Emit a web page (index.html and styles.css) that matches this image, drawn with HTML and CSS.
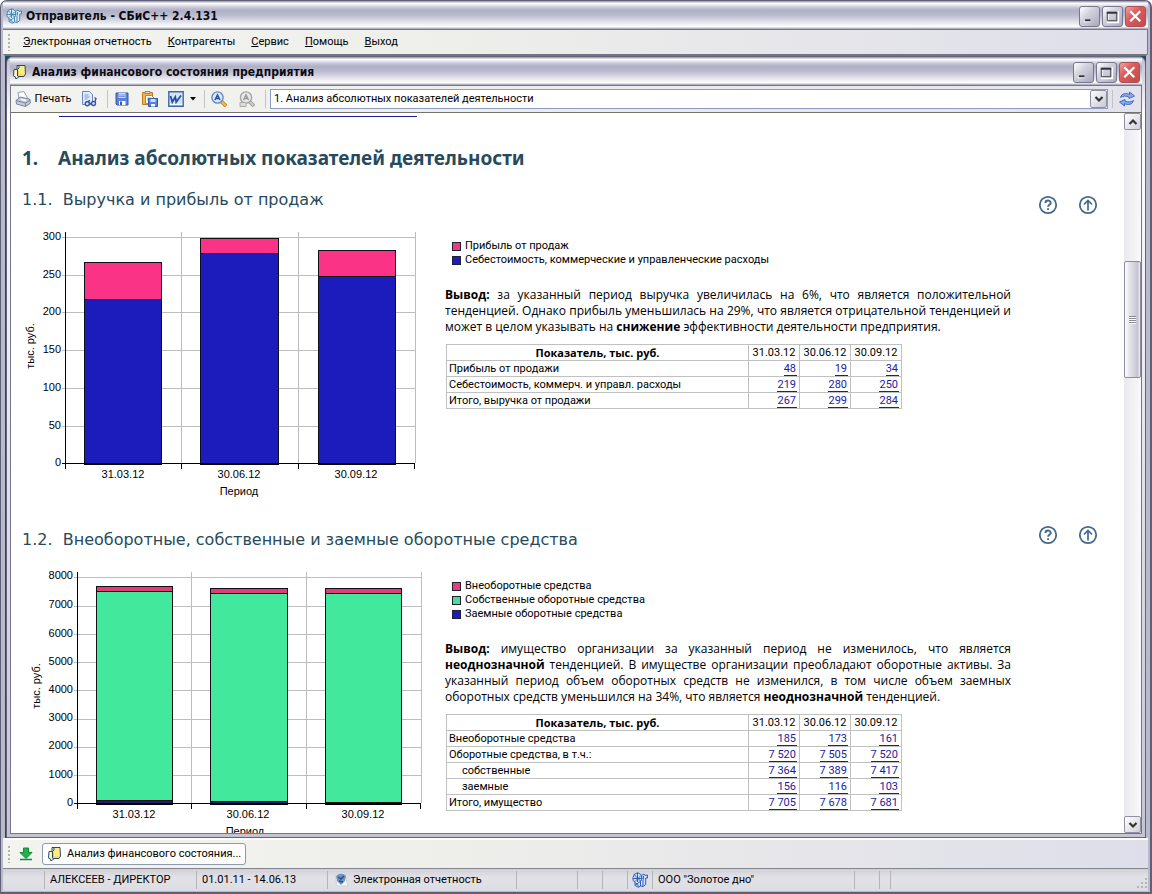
FILE: index.html
```html
<!DOCTYPE html>
<html lang="ru">
<head>
<meta charset="utf-8">
<title>Отправитель - СБиС++ 2.4.131</title>
<link rel="stylesheet" href="styles.css">
</head>
<body>
<svg class="defs" aria-hidden="true">
  <symbol id="i-logo" viewBox="0 0 16 16"><path d="M1 5.500 2.500 2 6 .800 9.500 3 10 7 8.500 9.500V14l-2 1.300L3 13.500V10L1 8.500Z" fill="var(--fill)" stroke="currentColor"/><path d="m2.500 3 6 6M9 3.500 3 9.500M5.500 1v9M1 6.500h9M3 13.500l5-4M3.500 10.500 7.500 15" fill="none" stroke="currentColor"/><path d="M9.500 3.500 12 2l1 1.500L15.500 3v3h-1.800v6.500L11 14.500 8.500 14V9.500L10 7Z" fill="var(--fill)" stroke="currentColor"/><path d="M11.500 4v3.500M11 8v6" stroke="currentColor"/></symbol>
  <symbol id="i-doc" viewBox="0 0 16 16"><path d="M5 1.500h8l.5 8.500-1.500 2.500H7L5 14Z" fill="#fbec86" stroke="#2c4a6c"/><path d="M7 1.500V4L5 6" fill="none" stroke="#2c4a6c"/><path d="M2 5.500h3.500V12L7 12.500l-2 2H3.500V13L1.500 12Z" fill="#fdf6b8" stroke="#2c4a6c"/><path d="M6.500 6.500V11h5" fill="none" stroke="#f0cc50"/></symbol>
  <symbol id="i-min" viewBox="0 0 20 20"><path d="M4 13h7v3H4Z" fill="#fff"/><path d="M5 13h6v2H5Z" fill="#333344"/></symbol>
  <symbol id="i-max" viewBox="0 0 20 20"><path d="M5 5.500h11V16H5Z" fill="none" stroke="#fff" stroke-width="2"/><path d="M4.500 5.500h10v9h-10Z" fill="none" stroke="#33333f"/><path d="M4 5h11v2H4Z" fill="#33333f"/></symbol>
  <symbol id="i-close" viewBox="0 0 20 20"><path d="m4.500 4.500 10.500 10.500M15 4.500 4.500 15" stroke="#fff" stroke-width="2.400"/></symbol>
  <symbol id="i-down" viewBox="0 0 10 10"><path d="m1.500 3 3.500 3.500L8.500 3" fill="none" stroke="#333" stroke-width="2.200"/></symbol>
  <symbol id="i-up" viewBox="0 0 10 10"><path d="M1.500 7 5 3.500 8.500 7" fill="none" stroke="#333" stroke-width="2.200"/></symbol>
  <symbol id="i-help" viewBox="0 0 20 20"><circle cx="10" cy="10" r="8.200" fill="#fff" stroke="#43698b" stroke-width="1.800"/><path d="M7.400 8C7.400 4.700 12.700 4.800 12.700 7.900 12.700 9.900 10.100 9.700 10.100 11.800M10.100 13.200v1.800" fill="none" stroke="#43698b" stroke-width="1.900"/></symbol>
  <symbol id="i-top" viewBox="0 0 20 20"><circle cx="10" cy="10" r="8.200" fill="#fff" stroke="#43698b" stroke-width="1.800"/><path d="M10 15.500V6M6 9.500l4-4 4 4" fill="none" stroke="#43698b" stroke-width="1.700"/></symbol>
</svg>

<div class="app">
  <header class="titlebar">
    <svg class="ico logo-light"><use href="#i-logo"/></svg>
    <h1 class="caption">Отправитель - СБиС++ 2.4.131</h1>
    <button class="winbtn" aria-label="Свернуть"><svg><use href="#i-min"/></svg></button>
    <button class="winbtn" aria-label="Развернуть"><svg><use href="#i-max"/></svg></button>
    <button class="winbtn close" aria-label="Закрыть"><svg><use href="#i-close"/></svg></button>
  </header>
  <nav class="menu">
    <span class="grip"></span>
    <button><u>Э</u>лектронная отчетность</button>
    <button><u>К</u>онтрагенты</button>
    <button><u>С</u>ервис</button>
    <button><u>П</u>омощь</button>
    <button><u>В</u>ыход</button>
  </nav>

  <div class="mdi">
    <div class="child">
      <header class="titlebar inner">
        <svg class="ico"><use href="#i-doc"/></svg>
        <h2 class="caption">Анализ финансового состояния предприятия</h2>
        <button class="winbtn" aria-label="Свернуть"><svg><use href="#i-min"/></svg></button>
        <button class="winbtn" aria-label="Развернуть"><svg><use href="#i-max"/></svg></button>
        <button class="winbtn close" aria-label="Закрыть"><svg><use href="#i-close"/></svg></button>
      </header>

      <div class="toolbar">
        <button class="tool print"><svg class="ico" viewBox="0 0 16 16"><path d="M4 8 3 1.500 9 .500l3.500 6.500" fill="#fff" stroke="#8ca0c4"/><path d="M1 9.500 5 6l9.500 2 1 4-5 3.500L1.500 13Z" fill="#c5cbdc" stroke="#7a84a0"/><path d="m1 9.500 9.500 2.500 5-3M10.500 12v3.500" fill="none" stroke="#7a84a0"/><path d="m6 8.500 5 1" stroke="#fff" stroke-width="1.500"/></svg>Печать</button>
        <button class="tool" aria-label="Просмотр"><svg class="ico" viewBox="0 0 16 16"><path d="M1.500.500h7l3 3v10h-10Z" fill="#e3ecfc" stroke="#6b85c0"/><path d="M3.500 4h4m-4 2h5m-5 2h3" stroke="#7f97cc"/><path d="m4 12 5-2.500M13.500 12l1.500-4.500-1.500-1" fill="none" stroke="#3c5998" stroke-width="1.400"/><path d="M8 12.500h3" stroke="#3c5998" stroke-width="1.400"/><circle cx="6.300" cy="12.800" r="2" fill="#dce8ff" stroke="#3c5998" stroke-width="1.400"/><circle cx="12.500" cy="12.500" r="2" fill="#dce8ff" stroke="#3c5998" stroke-width="1.400"/></svg></button>
        <span class="sep"></span>
        <button class="tool" aria-label="Сохранить"><svg class="ico" viewBox="0 0 16 16"><path d="M2 2h12v12H3l-1-1Z" fill="#5b80da" stroke="#3557ae"/><path d="M4.500 2h7v5h-7Z" fill="#c9d9fa"/><path d="M5 4h6M5 5.500h6" stroke="#7d96da"/><path d="M5 10h6.500v4H5Z" fill="#fff"/><path d="M6 10.500h2V14H6Z" fill="#3557ae"/></svg></button>
        <button class="tool" aria-label="Сохранить как"><svg class="ico" viewBox="0 0 16 16"><path d="M.500 1.500h10v12H.500Z" fill="#f3b44a" stroke="#c27a20"/><path d="M3 .500h5v2H3Z" fill="#d9dce8" stroke="#888"/><path d="M3.500 4.500h6l3 3v5h-9Z" fill="#fff" stroke="#b5883c"/><path d="M5 7h4m-4 2h2" stroke="#e0a030"/><path d="M6.500 7.500h9v8h-9Z" fill="#5b80da" stroke="#3557ae"/><path d="M8.500 8h5v3h-5Z" fill="#d5e1fb"/><path d="M9 13h4v2.500H9Z" fill="#fff"/></svg></button>
        <button class="tool word" aria-label="Экспорт в Word"><svg class="ico" viewBox="0 0 16 16"><path d="M.800.800h14.400v14.400H.800Z" fill="#d4e4fa" stroke="#3c68b0" stroke-width="1.400"/><path d="m2.500 5 1.800 6 3-5 .9 5L13 4.500" fill="none" stroke="#2450a0" stroke-width="1.800"/><path d="M2 13.500h12" stroke="#fff"/></svg><svg class="drop" viewBox="0 0 6 4"><path d="M0 0h6L3 3.500Z"/></svg></button>
        <span class="sep"></span>
        <button class="tool" aria-label="Увеличить шрифт"><svg class="ico" viewBox="0 0 16 16"><path d="m10 10 5 5" stroke="#b87820" stroke-width="3.600"/><path d="m10 10 4.500 4.500" stroke="#f6be4c" stroke-width="2"/><circle cx="6.500" cy="6.500" r="5.600" fill="#d8e8fd" stroke="#6a87ba" stroke-width="1.400"/><path d="m4 9 2.500-5L9 9M5 7.500h3" fill="none" stroke="#2350a4" stroke-width="1.500"/></svg></button>
        <button class="tool" aria-label="Уменьшить шрифт" disabled><svg class="ico" viewBox="0 0 16 16"><path d="m10 10 5 5" stroke="#999" stroke-width="3.600"/><path d="m10 10 4.500 4.500" stroke="#ccc" stroke-width="2"/><circle cx="7" cy="6.500" r="5.600" fill="#e8e8e8" stroke="#a5a5a5" stroke-width="1.400"/><path d="m4.500 9 2.500-5 2.500 5M5.500 7.500h3" fill="none" stroke="#999" stroke-width="1.500"/><path d="M1 11.500h6v4H1Z" fill="#ddd" stroke="#aaa"/></svg></button>
        <span class="sep"></span>
        <div class="combo">
          <select aria-label="Раздел отчета"><option>1. Анализ абсолютных показателей деятельности</option></select>
          <span class="arrow"><svg><use href="#i-down"/></svg></span>
        </div>
        <span class="sep"></span>
        <button class="tool" aria-label="Обновить"><svg class="ico" viewBox="0 0 16 16"><path d="M1.500 6.500C2.500 2.500 7 1.500 10.500 3.500V1l5 4-5.500 2.500V6C7 4.500 4 5 1.500 6.500Z" fill="#86acf0" stroke="#4468bc"/><path d="M14.500 9.500C13.500 13.500 9 14.500 5.500 12.500V15l-5-4L6 8.500V10c3 1.500 6 1 8.500-.5Z" fill="#86acf0" stroke="#4468bc"/></svg></button>
      </div>

      <div class="view">
        <main class="report">
          <div class="prev"></div>
          <h2 class="h-main"><span>1.</span>Анализ абсолютных показателей деятельности</h2>

          <section class="block">
            <div class="head">
              <h3>1.1.&nbsp; Выручка и прибыль от продаж</h3>
              <button class="round" aria-label="Справка"><svg><use href="#i-help"/></svg></button>
              <button class="round" aria-label="К началу"><svg><use href="#i-top"/></svg></button>
            </div>
            <div class="cols">
              <svg class="chart" viewBox="22 228 400 282">
                <path class="grid" d="M62 237.500h354M62 275.500h354M62 312.500h354M62 350.500h354M62 388.500h354M62 426.500h354M181.500 232v231M298.500 232v231M415.500 232v231"/>
                <g class="bar">
                  <path class="pink" d="M84.500 262.500h77v37h-77ZM200.500 238.500h78v15h-78ZM318.500 250.500h77v26h-77Z"/>
                  <path class="blue" d="M84.500 299.500h77v164h-77ZM200.500 253.500h78v210h-78ZM318.500 276.500h77v187h-77Z"/>
                </g>
                <path class="axis" d="M65.500 232v237M62 463.500h353M181.500 463v6M298.500 463v6M414.500 463v6M84 464.500h78M200 464.500h79M318 464.500h78"/>
                <g class="ylab"><text x="61" y="240">300</text><text x="61" y="278">250</text><text x="61" y="315">200</text><text x="61" y="353">150</text><text x="61" y="391">100</text><text x="61" y="429">50</text><text x="61" y="466">0</text></g>
                <g class="xlab"><text x="123" y="478">31.03.12</text><text x="239" y="478">30.06.12</text><text x="356" y="478">30.09.12</text><text x="239" y="495">Период</text><text transform="translate(34 346) rotate(-90)">тыс. руб.</text></g>
              </svg>
              <div class="info">
                <ul class="legend"><li><i class="pink"></i>Прибыль от продаж</li><li><i class="blue"></i>Себестоимость, коммерческие и управленческие расходы</li></ul>
                <p><b>Вывод:</b> за указанный период выручка увеличилась на 6%, что является положительной тенденцией. Однако прибыль уменьшилась на 29%, что является отрицательной тенденцией и может в целом указывать на <b>снижение</b> эффективности деятельности предприятия.</p>
                <table>
                  <thead><tr><th>Показатель, тыс. руб.</th><td>31.03.12</td><td>30.06.12</td><td>30.09.12</td></tr></thead>
                  <tbody>
                    <tr><td>Прибыль от продажи</td><td><a href="#">48</a></td><td><a href="#">19</a></td><td><a href="#">34</a></td></tr>
                    <tr><td>Себестоимость, коммерч. и управл. расходы</td><td><a href="#">219</a></td><td><a href="#">280</a></td><td><a href="#">250</a></td></tr>
                    <tr><td>Итого, выручка от продажи</td><td><a href="#">267</a></td><td><a href="#">299</a></td><td><a href="#">284</a></td></tr>
                  </tbody>
                </table>
              </div>
            </div>
          </section>

          <section class="block">
            <div class="head raised">
              <h3>1.2.&nbsp; Внеоборотные, собственные и заемные оборотные средства</h3>
              <button class="round" aria-label="Справка"><svg><use href="#i-help"/></svg></button>
              <button class="round" aria-label="К началу"><svg><use href="#i-top"/></svg></button>
            </div>
            <div class="cols">
              <svg class="chart" viewBox="22 568 400 282">
                <path class="grid" d="M74 577.500h348M74 606.500h348M74 634.500h348M74 662.500h348M74 690.500h348M74 719.500h348M74 747.500h348M74 775.500h348M191.500 572v231M306.500 572v231M421.500 572v231"/>
                <g class="bar">
                  <path class="rose" d="M96.500 586.500h76v5h-76ZM210.500 588.500h77v5h-77ZM325.500 588.500h76v5h-76Z"/>
                  <path class="green" d="M96.500 591.500h76v209h-76ZM210.500 593.500h77v208h-77ZM325.500 593.500h76v209h-76Z"/>
                  <path class="navy" d="M96.500 800.500h76v3h-76ZM210.500 801.500h77v2h-77ZM325.500 802.500h76v1h-76Z"/>
                </g>
                <path class="axis" d="M77.500 572v237M74 803.500h347M191.500 803v6M306.500 803v6M420.500 803v6M96 804.500h77M210 804.500h78M325 804.500h77"/>
                <g class="ylab"><text x="73" y="579">8000</text><text x="73" y="608">7000</text><text x="73" y="637">6000</text><text x="73" y="665">5000</text><text x="73" y="693">4000</text><text x="73" y="721">3000</text><text x="73" y="749">2000</text><text x="73" y="778">1000</text><text x="73" y="806">0</text></g>
                <g class="xlab"><text x="134" y="818">31.03.12</text><text x="248" y="818">30.06.12</text><text x="363" y="818">30.09.12</text><text x="245" y="835">Период</text><text transform="translate(40 686) rotate(-90)">тыс. руб.</text></g>
              </svg>
              <div class="info">
                <ul class="legend"><li><i class="rose"></i>Внеоборотные средства</li><li><i class="green"></i>Собственные оборотные средства</li><li><i class="blue"></i>Заемные оборотные средства</li></ul>
                <p><b>Вывод:</b> имущество организации за указанный период не изменилось, что является <b>неоднозначной</b> тенденцией. В имуществе организации преобладают оборотные активы. За указанный период объем оборотных средств не изменился, в том числе объем заемных оборотных средств уменьшился на 34%, что является <b>неоднозначной</b> тенденцией.</p>
                <table>
                  <thead><tr><th>Показатель, тыс. руб.</th><td>31.03.12</td><td>30.06.12</td><td>30.09.12</td></tr></thead>
                  <tbody>
                    <tr><td>Внеоборотные средства</td><td><a href="#">185</a></td><td><a href="#">173</a></td><td><a href="#">161</a></td></tr>
                    <tr><td>Оборотные средства, в т.ч.:</td><td><a href="#">7 520</a></td><td><a href="#">7 505</a></td><td><a href="#">7 520</a></td></tr>
                    <tr><td class="sub">собственные</td><td><a href="#">7 364</a></td><td><a href="#">7 389</a></td><td><a href="#">7 417</a></td></tr>
                    <tr><td class="sub">заемные</td><td><a href="#">156</a></td><td><a href="#">116</a></td><td><a href="#">103</a></td></tr>
                    <tr><td>Итого, имущество</td><td><a href="#">7 705</a></td><td><a href="#">7 678</a></td><td><a href="#">7 681</a></td></tr>
                  </tbody>
                </table>
              </div>
            </div>
          </section>
        </main>
        <div class="scroll">
          <button class="sbtn" aria-label="Вверх"><svg><use href="#i-up"/></svg></button>
          <div class="track"><div class="thumb"><i></i></div></div>
          <button class="sbtn" aria-label="Вниз"><svg><use href="#i-down"/></svg></button>
        </div>
      </div>
    </div>
  </div>

  <div class="tasks">
    <span class="grip"></span>
    <button class="tool" aria-label="Окна"><svg class="ico" viewBox="0 0 16 16"><path d="M5.500 2h5v4.500H14l-6 6-6-6h3.500Z" fill="#22b04a" stroke="#128a34"/><path d="M2 13.500h12" stroke="#128a34" stroke-width="1.500"/></svg></button>
    <button class="task"><svg class="ico"><use href="#i-doc"/></svg>Анализ финансового состояния...</button>
  </div>
  <footer class="status">
    <span class="w-a"></span>
    <span class="w-b">АЛЕКСЕЕВ - ДИРЕКТОР</span>
    <span class="w-c">01.01.11 - 14.06.13</span>
    <span class="w-d"><svg class="ico" viewBox="0 0 16 16"><path d="M2 2h10l3 12H4Z" fill="#f4f6fa" stroke="#d0d4dc"/><path d="M3 4c3-3 7-3 10 0l-1 5-4 4-4-4Z" fill="#6c94c4"/><path d="m5 5 3 2 3-3M6 9l4 1" stroke="#2b4f80" fill="none" stroke-width="1.500"/></svg>Электронная отчетность</span>
    <span class="w-e"></span>
    <span class="w-f"></span>
    <span class="w-f"></span>
    <span class="w-f logo"><svg class="ico"><use href="#i-logo"/></svg></span>
    <span class="w-g">ООО "Золотое дно"</span>
    <span class="w-f"></span>
    <span class="w-h"></span>
    <span class="w-i"><svg class="size" viewBox="0 0 12 12"><path d="M9 1h2v2H9ZM5 5h2v2H5ZM9 5h2v2H9ZM1 9h2v2H1ZM5 9h2v2H5ZM9 9h2v2H9Z" fill="#b4b4b8"/></svg></span>
  </footer>
</div>
</body>
</html>
```
FILE: styles.css
```css
* { box-sizing: border-box; }
body {
  margin: 0;
  background: #fff;
  font: 11px/16px Roboto, "Open Sans", sans-serif;
  color: #000;
}
h1, h2, h3, p, ul { margin: 0; padding: 0; }
button { font: inherit; color: inherit; border: 0; background: none; padding: 0; }
.defs { display: none; }
.ico { width: 16px; height: 16px; flex: none; --fill: #d3e2fb; color: #2f5cb8; }
.logo-light { --fill: #d9effa; color: #4585b4; }

.app {
  height: 100vh;
  display: flex;
  flex-direction: column;
  border: 1px solid #5f5f78;
  border-width: 1px 2px 2px 1px;
  border-radius: 7px 7px 0 0;
  padding: 0 2px 1px 2px;
  background: #b9b9cc;
  overflow: hidden;
}
.titlebar {
  height: 28px;
  flex: none;
  display: flex;
  align-items: center;
  gap: 2px;
  padding: 2px 2px 0 3px;
  background: linear-gradient(#8c8ca6 0, #fff 8%, #c3c3d4 24%, #b0b0c6 34%, #bdbdd0 52%, #e4e4ec 76%, #fff 92%, #9a9aae 100%);
}
.titlebar.inner { padding-left: 2px; }
.caption { flex: 1; padding-left: 2px; font: bold 12px/16px "DejaVu Sans Condensed", "DejaVu Sans", sans-serif; color: #0b0b12; }
.winbtn {
  width: 21px;
  height: 21px;
  border: 1px solid #77778e;
  border-radius: 3px;
  background: linear-gradient(135deg, #fff 0, #d2d2de 40%, #a9a9be 100%);
}
.winbtn svg { display: block; width: 19px; height: 19px; }
.winbtn.close { border-color: #a8545c; background: linear-gradient(135deg, #f0a0a0 0, #dc5c5c 40%, #c84848 100%); }

.menu, .tasks { display: flex; align-items: center; flex: none; background: linear-gradient(90deg, #f3f3ef, #eeeeea 40%, #dedeea); }
.menu { height: 25px; border-top: 1px solid #77778a; border-right: 1px solid #77778a; padding-left: 5px; gap: 16px; }
.grip { width: 2px; height: 17px; flex: none; background: repeating-linear-gradient(#b4b4ae 0 2px, transparent 2px 4px); }
.menu .grip { margin-right: -3px; }

.mdi {
  flex: 1;
  min-height: 0;
  display: flex;
  background: #1d4a66;
  border: 2px solid #b9b9cc;
  border-top-color: #74747e;
  border-bottom: 0;
  padding-left: 1px;
}
.child {
  flex: 1;
  min-width: 0;
  display: flex;
  flex-direction: column;
  border: 1px solid #64647c;
  border-radius: 7px 7px 0 0;
  padding: 0 3px 3px;
  background: linear-gradient(#c0c0d2, #fff 60px, #c4c4d4);
  overflow: hidden;
}
.toolbar {
  height: 28px;
  flex: none;
  display: flex;
  align-items: center;
  border: 1px solid #77778a;
  border-bottom-color: #73736e;
  background: linear-gradient(90deg, #f3f3ef, #eeeeea 40%, #e2e2ec);
}
.tool { display: flex; align-items: center; justify-content: center; width: 28px; height: 22px; flex: none; }
.print { width: 64px; gap: 4px; }
.word { gap: 6px; width: 36px; }
.drop { width: 6px; height: 4px; }
.sep { width: 1px; height: 18px; margin: 0 0 0 4px; background: #c3c3c6; }
.combo { flex: 1; min-width: 0; height: 20px; margin-left: 4px; display: flex; border: 1px solid #8c9cc0; background: #fff; }
.combo select { flex: 1; min-width: 0; appearance: none; border: 0; padding: 0 3px; background: #fff; font: inherit; outline: 0; color: #000; }
.arrow { width: 17px; display: grid; place-items: center; border: 1px solid #9090a4; border-radius: 2px; background: linear-gradient(135deg, #fff, #c6c6d4); }
.arrow svg, .sbtn svg { width: 10px; height: 10px; }

.view { flex: 1; min-height: 0; display: flex; background: #fff; border: 1px solid #74748a; border-top: 0; }
.report { flex: 1; min-width: 0; overflow: hidden; padding-left: 11px; }
.prev { width: 358px; height: 4px; margin-left: 37px; border-bottom: 1px solid #1c1c9c; }
.h-main { margin-top: 29px; display: flex; color: #274a5c; font: bold 19px/24px "Noto Sans", "DejaVu Sans", sans-serif; }
.h-main span { width: 36px; }
.head { display: flex; align-items: center; height: 46px; padding-right: 26px; gap: 20px; }
.head h3 { flex: 1; padding-bottom: 10px; color: #274a5c; font: 16px/22px "DejaVu Sans", sans-serif; }
.head.raised { align-items: flex-start; padding-top: 3px; }
.head.raised h3 { padding: 4px 0 0; }
.round { width: 20px; height: 20px; }
.round svg { display: block; width: 20px; height: 20px; }
.block { height: 340px; padding-top: 12px; }
.cols { display: flex; gap: 23px; }
.chart { width: 400px; height: 282px; flex: none; shape-rendering: crispEdges; }
.chart text { font: 11px "Liberation Sans", Arial, sans-serif; }
.ylab { text-anchor: end; }
.xlab { text-anchor: middle; }
.grid { stroke: #bdbdbd; fill: none; }
.axis { stroke: #000; fill: none; }
.bar { stroke: #101018; }
.pink { fill: #fb3387; background: #ee3a80; }
.rose { fill: #e23c78; background: #e83c7c; }
.blue { fill: #1c1cbc; background: #1c1cbc; }
.navy { fill: #1e1e70; }
.green { fill: #42e89c; background: #4cdc98; }
.info { width: 566px; padding-top: 11px; }
.legend { list-style: none; padding-left: 7px; }
.legend li { display: flex; align-items: center; gap: 4px; line-height: 14px; }
.legend i { width: 9px; height: 9px; border: 1px solid #202030; }
.info p { margin-top: 20px; font: 12px/16px "Open Sans", "Noto Sans", sans-serif; text-align: justify; }
table { margin: 9px 0 0 1px; width: 456px; table-layout: fixed; border-collapse: collapse; }
th, td { height: 16px; padding: 0 2px; border: 1px solid #c0c0c0; line-height: 15px; text-align: left; white-space: nowrap; }
th { text-align: center; font-family: "Open Sans", "Noto Sans", sans-serif; }
td + td, th + td { width: 51px; text-align: right; }
thead td + td, thead th + td { text-align: center; }
.sub { padding-left: 15px; }
td a { display: inline-block; height: 15px; padding-right: 1px; border-bottom: 1px solid #1c1c9c; color: #1c1c9c; text-decoration: none; }

.scroll { width: 17px; flex: none; display: flex; flex-direction: column; background: linear-gradient(90deg, #e8e8ee, #fafafc); }
.sbtn { height: 17px; display: grid; place-items: center; border: 1px solid #9090a2; border-radius: 2px; background: linear-gradient(135deg, #fff, #d0d0da); }
.track { flex: 1; padding-top: 131px; }
.thumb { height: 117px; display: grid; place-items: center; border: 1px solid #8c8c9c; border-radius: 2px; background: linear-gradient(90deg, #fff, #e4e4ec 30%, #c4c4d0 85%, #f0f0f4); }
.thumb i { width: 7px; height: 8px; background: repeating-linear-gradient(#8c8c98 0 1px, #fff 1px 2px); }

.tasks { height: 30px; border-top: 2px solid #fff; padding-left: 5px; gap: 2px; }
.task { display: flex; align-items: center; gap: 4px; height: 22px; padding: 0 4px; border: 1px solid #8b9bab; border-radius: 3px; background: #fdfdfd; }
.status { height: 23px; flex: none; display: flex; border-top: 1px solid #84848c; background: linear-gradient(#d0d0d6, #e2e2e8 40%, #dcdce4); }
.status span { display: flex; align-items: center; gap: 4px; margin: 2px 0; border-right: 1px solid #b4b4b6; padding: 0 5px; }
.w-a { width: 42px; }
.w-b { width: 152px; }
.w-c { width: 131px; }
.w-d { width: 189px; }
.w-e { width: 61px; }
.w-f { width: 25px; }
.w-g { width: 202px; }
.w-h { width: 6px; }
.status .w-i { flex: 1; justify-content: flex-end; align-items: flex-end; border: 0; padding: 0; }
.size { width: 12px; height: 12px; }
.status .logo { padding: 0 4px; }
```
